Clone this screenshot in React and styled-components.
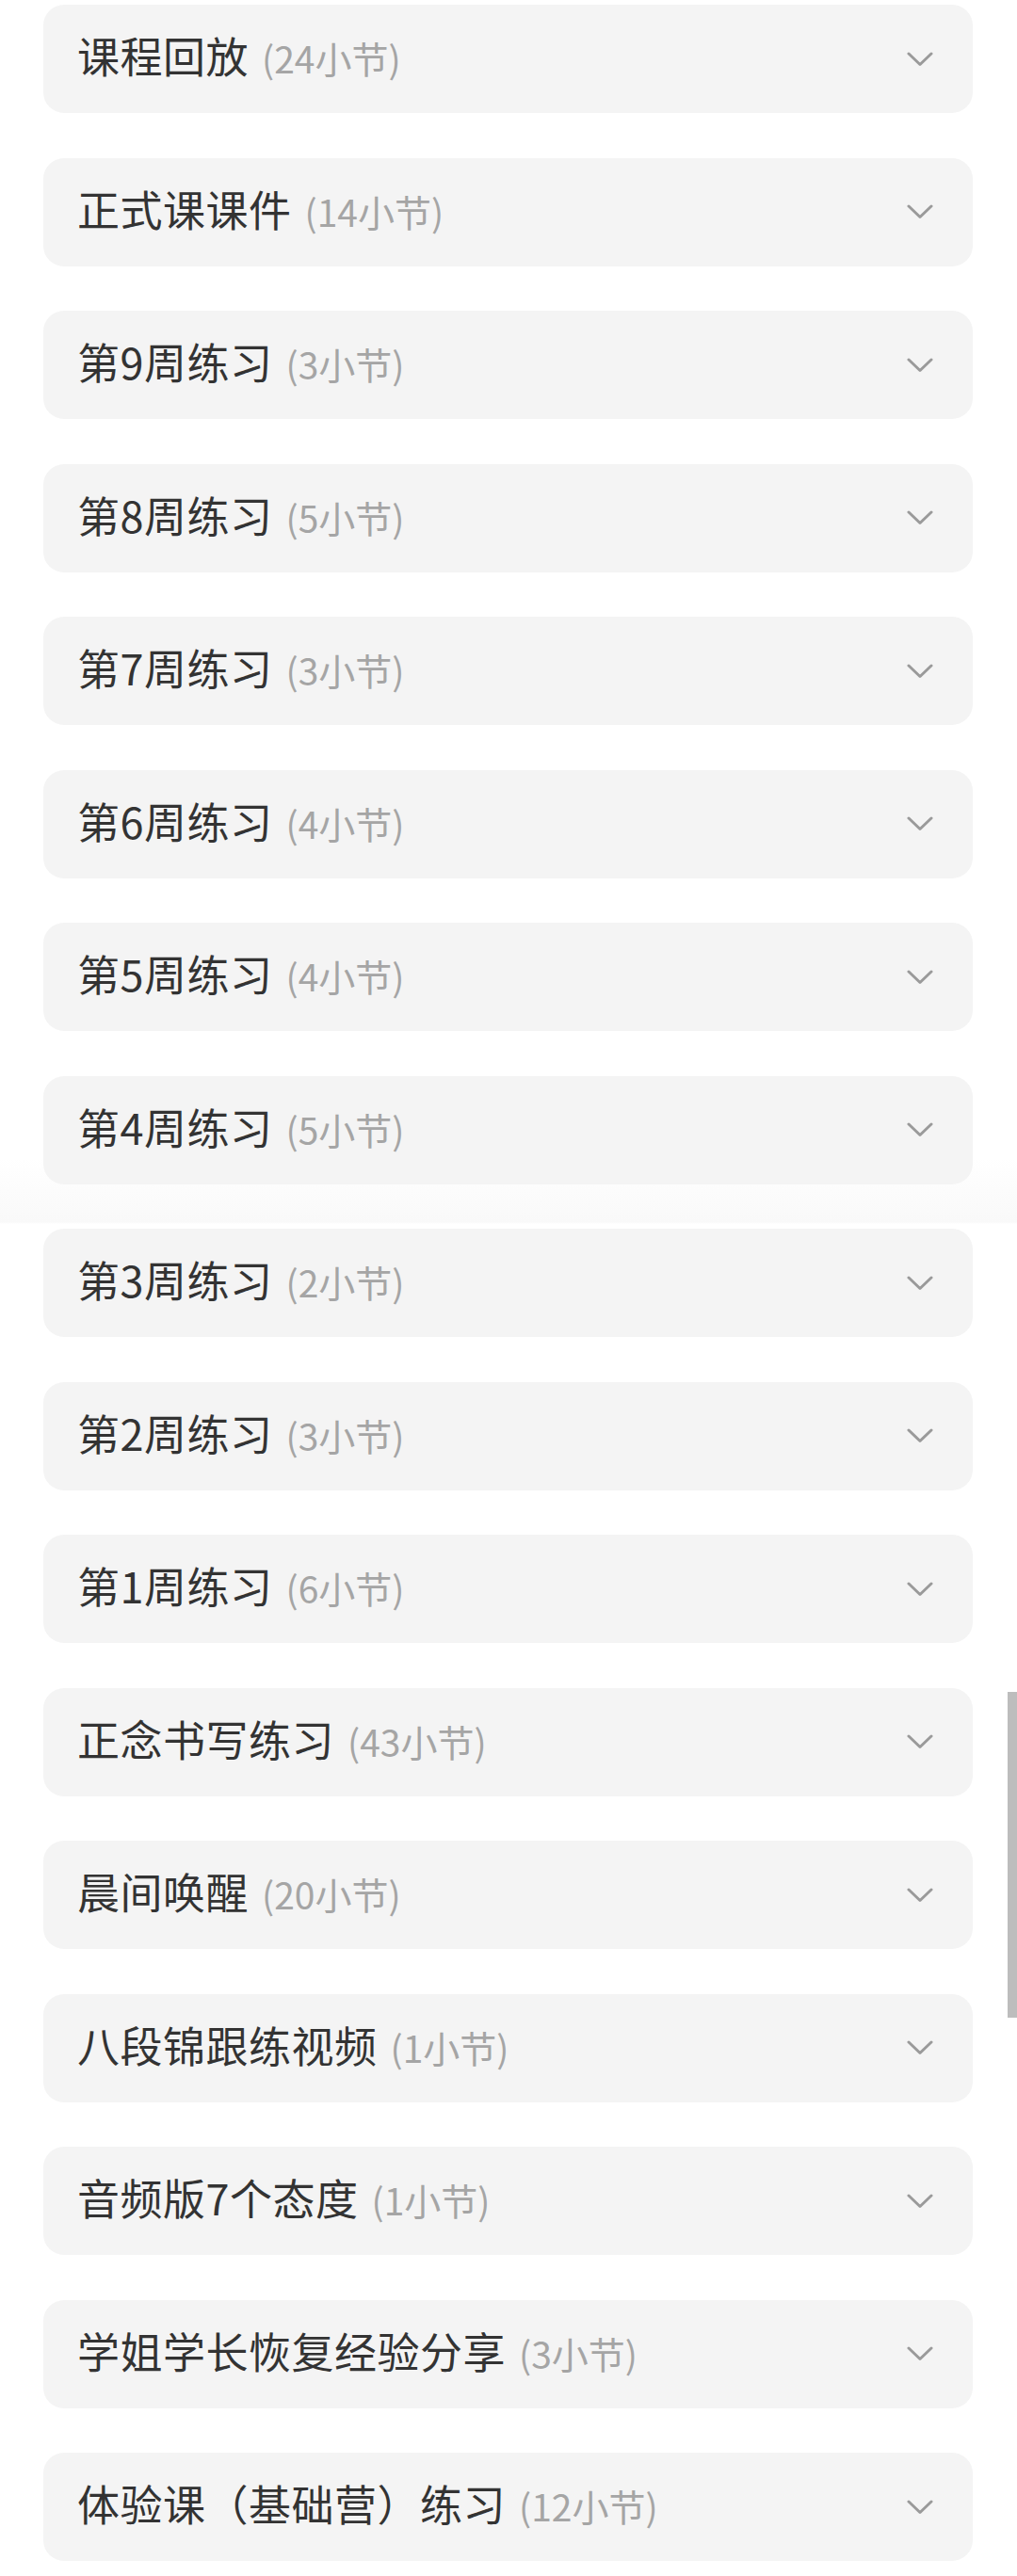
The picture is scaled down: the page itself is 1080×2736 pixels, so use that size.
import React from "react";
import styled, { createGlobalStyle } from "styled-components";

const GlobalStyle = createGlobalStyle`
  html, body {
    margin: 0;
    padding: 0;
  }
  body {
    font-family: "Noto Sans CJK SC", "Noto Sans", sans-serif;
    background: linear-gradient(
      to bottom,
      #ffffff 0,
      #ffffff 1230px,
      #f9f9f9 1298px,
      #ffffff 1300px,
      #ffffff 100%
    );
    background-repeat: no-repeat;
  }
`;

const List = styled.div`
  display: flex;
  flex-direction: column;
  gap: 47.5px;
  padding: 5px 47px 16px 46px;
`;

const Section = styled.div`
  height: 115px;
  box-sizing: border-box;
  display: flex;
  align-items: center;
  justify-content: space-between;
  padding: 0 42px 0 36px;
  background: #f4f4f4;
  border-radius: 22px;
`;

const Title = styled.div`
  display: flex;
  align-items: baseline;
  gap: 14px;
  white-space: nowrap;
  line-height: 1;
  padding-bottom: 8px;
`;

const Name = styled.span`
  font-size: 45px;
  color: #333333;
  letter-spacing: 0.5px;
`;

const Count = styled.span`
  font-size: 39px;
  color: #a5a5a5;
`;

const Chevron = styled.svg`
  width: 28px;
  height: 16px;
  flex-shrink: 0;
`;

const Scrollbar = styled.div`
  position: absolute;
  top: 1797px;
  right: 0;
  width: 10px;
  height: 346px;
  background: #bdbdbd;
`;

const sections = [
  ["课程回放", 24],
  ["正式课课件", 14],
  ["第9周练习", 3],
  ["第8周练习", 5],
  ["第7周练习", 3],
  ["第6周练习", 4],
  ["第5周练习", 4],
  ["第4周练习", 5],
  ["第3周练习", 2],
  ["第2周练习", 3],
  ["第1周练习", 6],
  ["正念书写练习", 43],
  ["晨间唤醒", 20],
  ["八段锦跟练视频", 1],
  ["音频版7个态度", 1],
  ["学姐学长恢复经验分享", 3],
  ["体验课（基础营）练习", 12],
];

export default function App() {
  return (
    <>
      <GlobalStyle />
      <List>
        {sections.map(([name, n], i) => (
          <Section key={i}>
            <Title>
              <Name>{name}</Name>
              <Count>({n}小节)</Count>
            </Title>
            <Chevron viewBox="0 0 28 16" fill="none">
              <path
                d="M2 2 L14 13.5 L26 2"
                stroke="#9a9a9a"
                strokeWidth="3"
                strokeLinecap="round"
                strokeLinejoin="round"
              />
            </Chevron>
          </Section>
        ))}
      </List>
      <Scrollbar />
    </>
  );
}
